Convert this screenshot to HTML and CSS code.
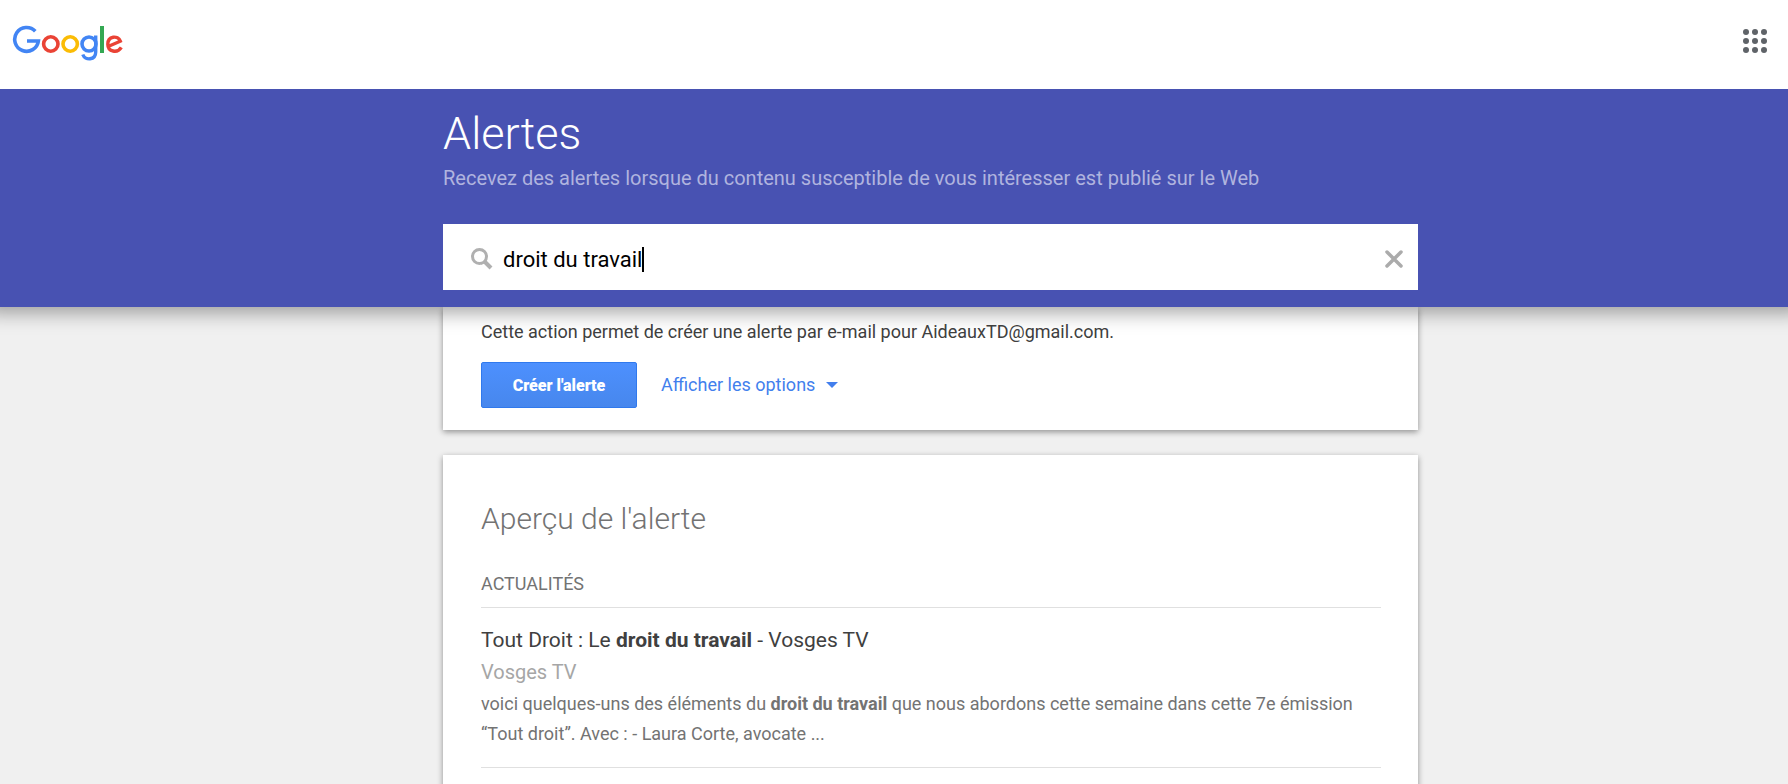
FILE: index.html
```html
<!DOCTYPE html>
<html lang="fr">
<head>
    <meta charset="UTF-8">
    <meta name="viewport" content="width=device-width, initial-scale=1.0">
    <title>Google Alertes</title>
    <link rel="stylesheet" href="styles.css">
</head>
<body>
<header class="topbar">
    <a href="#" class="logo" aria-label="Google">
        <svg width="112" height="38" viewBox="0 0 112 38" fill="none" stroke-width="3.600">
            <path d="M23.300 7.300A11.900 11.900 0 1 0 26.400 17H15" stroke="#4285f4"/>
            <circle cx="38.800" cy="20" r="7.200" stroke="#ea4335"/>
            <circle cx="58.200" cy="20" r="7.200" stroke="#fbbc05"/>
            <circle cx="77" cy="20" r="7" stroke="#4285f4"/>
            <path d="M83.700 11.500V28C83.700 36.500 73 36.800 70.800 30.500" stroke="#4285f4" stroke-width="3.400"/>
            <path d="M90 2V29" stroke="#34a853" stroke-width="4"/>
            <path d="M95.500 22.800L108.300 17.200C106 11 95.800 11.800 95.800 20.200C95.800 28 105.500 29.500 109.300 23.300" stroke="#ea4335" stroke-width="3.400"/>
        </svg>
    </a>
    <button type="button" class="apps" aria-label="Applications Google">
        <svg width="24" height="24" viewBox="0 0 24 24" fill="#5f6368">
            <circle cx="3" cy="3" r="3"/><circle cx="12" cy="3" r="3"/><circle cx="21" cy="3" r="3"/>
            <circle cx="3" cy="12" r="3"/><circle cx="12" cy="12" r="3"/><circle cx="21" cy="12" r="3"/>
            <circle cx="3" cy="21" r="3"/><circle cx="12" cy="21" r="3"/><circle cx="21" cy="21" r="3"/>
        </svg>
    </button>
</header>

<div class="banner">
    <div class="column">
        <h1>Alertes</h1>
        <p class="subtitle">Recevez des alertes lorsque du contenu susceptible de vous intéresser est publié sur le Web</p>
        <form class="search">
            <svg width="22" height="22" viewBox="0 0 22 22" fill="none" stroke="#b0b0b0">
                <circle cx="8.500" cy="8.500" r="7" stroke-width="3"/>
                <path d="M13.500 13.500L20 20" stroke-width="4"/>
            </svg>
            <input type="text" value="droit du travail" aria-label="Créer une alerte sur">
            <span class="caret"></span>
            <button type="reset" class="clear" aria-label="Effacer">
                <svg width="18" height="18" viewBox="0 0 18 18" fill="none" stroke="#ababab" stroke-width="3.500" stroke-linecap="round">
                    <path d="M2 2L16 16M16 2L2 16"/>
                </svg>
            </button>
        </form>
    </div>
</div>

<main class="column">
    <section class="card create">
        <p>Cette action permet de créer une alerte par e-mail pour AideauxTD@gmail.com.</p>
        <div class="actions">
            <button type="button" class="submit">Créer l'alerte</button>
            <a href="#" class="options">Afficher les options
                <svg width="12" height="6" viewBox="0 0 12 6" fill="#427fed"><path d="M0 0H12L6 6Z"/></svg>
            </a>
        </div>
    </section>

    <section class="card preview">
        <h2>Aperçu de l'alerte</h2>
        <h3>ACTUALITÉS</h3>
        <article class="result">
            <a href="#" class="title">Tout Droit : Le <b>droit du travail</b> - Vosges TV</a>
            <p class="source">Vosges TV</p>
            <p class="excerpt">voici quelques-uns des éléments du <b>droit du travail</b> que nous abordons cette semaine dans cette 7e émission “Tout droit”. Avec : - Laura Corte, avocate ...</p>
        </article>
    </section>
</main>
</body>
</html>
```
FILE: styles.css
```css
* {
    box-sizing: border-box;
}
body {
    margin: 0;
    font-family: Roboto, "Liberation Sans", sans-serif;
    font-size: 18px;
    color: #404040;
    background-color: #f0f0f0;
}
h1, h2, h3, p {
    margin: 0;
}
a {
    text-decoration: none;
}
button {
    font-family: inherit;
    cursor: pointer;
}
svg {
    display: block;
}
.topbar {
    position: relative;
    z-index: 2;
    display: flex;
    align-items: center;
    justify-content: space-between;
    height: 89px;
    padding: 0 21px 8px 12px;
    background-color: #fff;
}
.logo {
    padding-top: 4px;
}
.apps,
.clear {
    padding: 0;
    border: none;
    background: none;
}
.column {
    max-width: 975px;
    margin-left: 443px;
}
.banner {
    position: relative;
    z-index: 1;
    padding: 17px 0;
    background-color: #4852b2;
    box-shadow: 0 -8px 18px 14px rgba(0, 0, 0, 0.35);
}
h1 {
    font-size: 45px;
    font-weight: 300;
    line-height: 56px;
    color: #fff;
}
.subtitle {
    font-size: 20px;
    line-height: 32px;
    color: #b0b4df;
}
.search {
    display: flex;
    align-items: center;
    height: 66px;
    margin-top: 30px;
    padding: 4px 15px 0 28px;
    background-color: #fff;
}
.search input {
    field-sizing: content;
    margin-left: 10px;
    padding: 0;
    border: none;
    outline: none;
    font-family: inherit;
    font-size: 22px;
    font-weight: 400;
    color: #000;
}
.caret {
    width: 2px;
    height: 25px;
    background-color: #000;
}
.clear {
    margin-left: auto;
}
.card {
    background-color: #fff;
    box-shadow: 0 2px 6px rgba(0, 0, 0, 0.4);
}
.create {
    padding: 10px 38px 22px;
    line-height: 30px;
}
.actions {
    display: flex;
    align-items: center;
    gap: 24px;
    margin-top: 15px;
}
.submit {
    min-width: 156px;
    height: 46px;
    padding: 0 30px;
    border: 1px solid #3079ed;
    border-radius: 2px;
    background-image: linear-gradient(#4d90fe, #4787ed);
    font-size: 16px;
    font-weight: 900;
    color: #fff;
}
.options {
    display: flex;
    align-items: center;
    gap: 11px;
    color: #427fed;
}
.preview {
    margin-top: 25px;
    padding: 44px 37px 44px 38px;
}
h2 {
    font-size: 30px;
    font-weight: 300;
    line-height: 40px;
    color: #737373;
}
h3 {
    margin-top: 30px;
    padding-bottom: 8px;
    border-bottom: 1px solid #e0e0e0;
    font-size: 18px;
    font-weight: 400;
    line-height: 30px;
    color: #737373;
}
.result {
    padding: 16px 0 18px;
    border-bottom: 1px solid #e0e0e0;
}
.title {
    display: block;
    font-size: 21px;
    line-height: 32px;
    color: #404040;
}
.source {
    font-size: 20px;
    line-height: 32px;
    color: #a6a6a6;
}
.excerpt {
    margin-top: 1px;
    line-height: 30px;
    color: #737373;
}
```
